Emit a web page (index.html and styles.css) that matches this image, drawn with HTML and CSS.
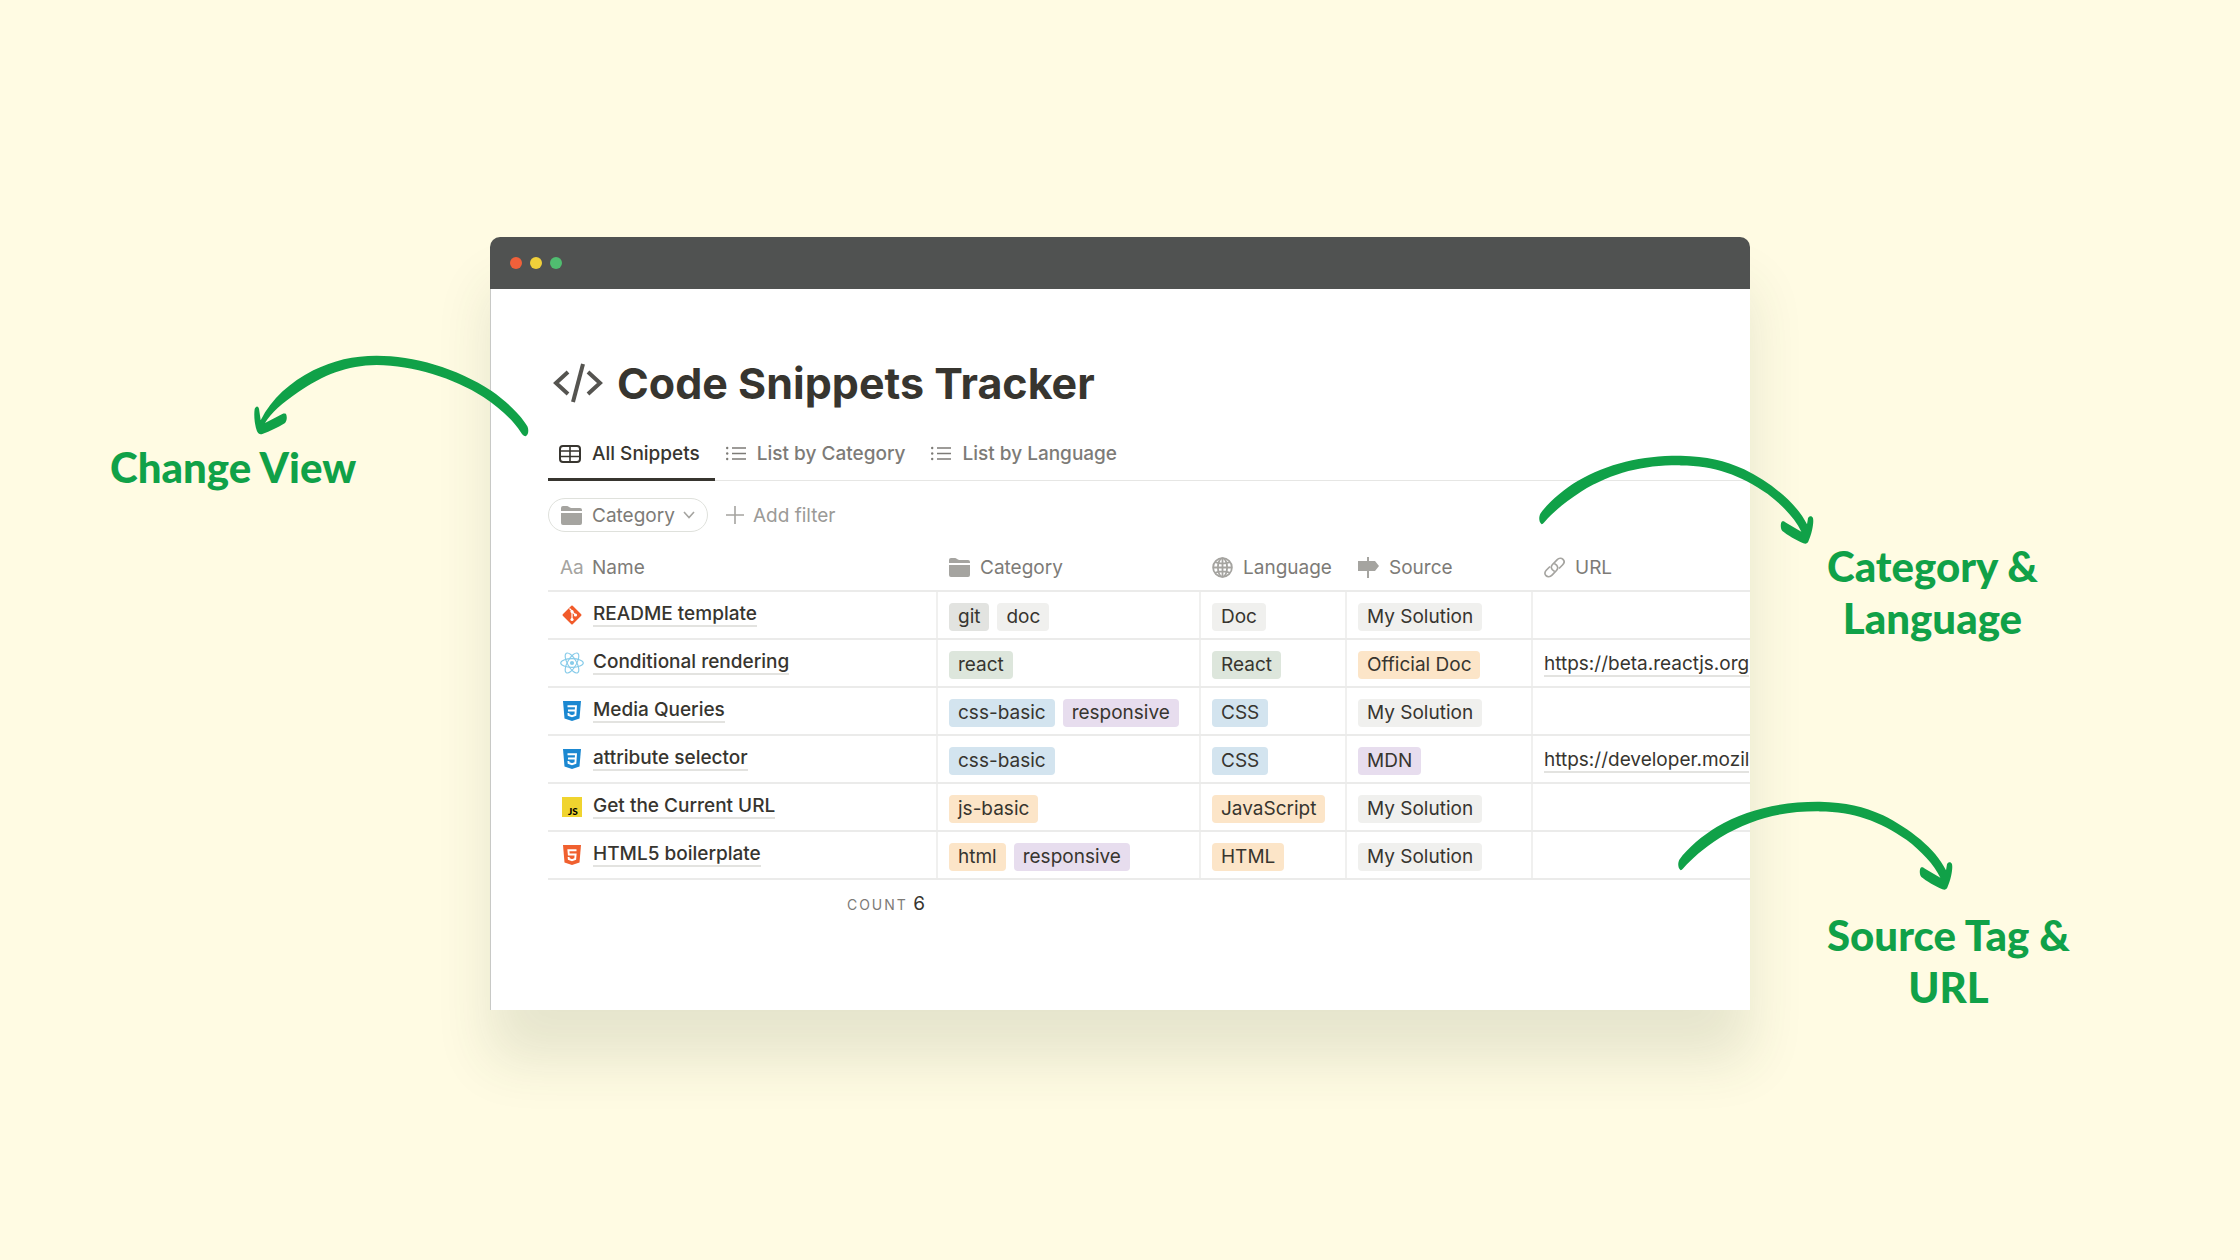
FILE: index.html
```html
<!DOCTYPE html>
<html lang="en">
<head>
  <meta charset="UTF-8">
  <meta name="viewport" content="width=device-width, initial-scale=1.0">
  <title>Code Snippets Tracker</title>
  <link rel="stylesheet" href="styles.css">
</head>
<body>

  <!-- Shared icons -->
  <svg class="sprite" aria-hidden="true">
    <symbol id="folder" viewBox="0 0 21 19">
      <path d="M0 2Q0 0 2 0H6Q7 0 8 1L10 2H19Q21 2 21 4V5H0Z M0 7H21V17Q21 19 19 19H2Q0 19 0 17Z" fill="#a5a4a0"/>
    </symbol>
    <symbol id="list" viewBox="0 0 20 15">
      <path d="M6 2H20M6 7.5H20M6 13H20" stroke="currentColor" stroke-width="1.6"/>
      <circle cx="1.2" cy="2" r="1.2" fill="currentColor"/>
      <circle cx="1.2" cy="7.5" r="1.2" fill="currentColor"/>
      <circle cx="1.2" cy="13" r="1.2" fill="currentColor"/>
    </symbol>
    <symbol id="css3" viewBox="0 0 18 20">
      <path d="M0 0H18L16.500 17.500L9 20L1.500 17.500Z" fill="#1b88d1"/>
      <path d="M4.500 5.200H13L12.400 14L9 15.200L5.600 14L5.400 12M5 9.500H12.700" fill="none" stroke="#fff" stroke-width="1.900"/>
    </symbol>
    <symbol id="arrow-right" viewBox="84 62 826 270">
      <path d="M92 270C82 262 84 246 88 238C112 204 160 164 200 140C290 86 400 63 510 64C590 66 640 78 700 105C780 145 857 205 889 270L892 252C896 244 904 244 907 252C910 262 905 295 893 322C890 329 884 329 878 327C855 317 830 302 815 290C809 284 809 268 813 262C817 259 822 261 826 265L872 292C854 254 815 212 770 178C690 122 610 93 510 93C400 92 310 112 210 172C160 204 124 236 100 264Q95 270 92 270Z" fill="#10a148"/>
    </symbol>
  </svg>

  <div class="stage">

    <div class="notes notes-left">
      <div class="note">
        <svg class="arrow arrow-view" viewBox="462 74 825 246" aria-hidden="true">
          <path d="M1277 318C1287 312 1286 296 1282 288C1260 250 1215 210 1175 182C1070 112 940 76 830 76C760 76 700 90 640 120C570 156 515 205 482 270L477 235C474 226 468 226 464 236C461 255 464 285 471 303C475 311 480 313 487 311C510 303 535 291 554 279C561 272 562 260 558 251C555 249 551 249 547 251L495 278C515 245 545 220 595 185C670 134 740 105 830 104C940 106 1060 142 1150 200C1200 234 1240 270 1262 305Q1270 318 1277 318Z" fill="#10a148"/>
        </svg>
        Change View
      </div>
    </div>

    <main class="window">
      <div class="titlebar">
        <span class="dot red"></span>
        <span class="dot yellow"></span>
        <span class="dot green"></span>
      </div>

      <div class="content">
        <h1>
          <svg class="code-icon" viewBox="0 0 50 40" aria-hidden="true">
            <path d="M15 9L3 20L15 31M35 9L47 20L35 31" fill="none" stroke="#555450" stroke-width="4"/>
            <path d="M30 1L20 39" stroke="#555450" stroke-width="4"/>
          </svg>
          Code Snippets Tracker
        </h1>

        <div class="tabs" role="tablist">
          <button class="tab active" role="tab" aria-selected="true">
            <svg class="table-icon" viewBox="0 0 22 18" aria-hidden="true">
              <rect x="1" y="1" width="20" height="16" rx="3" fill="none" stroke="currentColor" stroke-width="2"/>
              <path d="M1 6H21M1 11.500H21M11 1V17" stroke="currentColor" stroke-width="1.600"/>
            </svg>
            All Snippets
          </button>
          <button class="tab" role="tab" aria-selected="false">
            <svg class="list-icon" aria-hidden="true"><use href="#list"/></svg>
            List by Category
          </button>
          <button class="tab" role="tab" aria-selected="false">
            <svg class="list-icon" aria-hidden="true"><use href="#list"/></svg>
            List by Language
          </button>
        </div>

        <div class="filters">
          <div class="filter">
            <svg class="folder-icon" aria-hidden="true"><use href="#folder"/></svg>
            <select id="filter" aria-label="Filter">
              <option>Category</option>
            </select>
            <svg class="chevron" viewBox="0 0 12 8" aria-hidden="true"><path d="M1 1L6 6.500L11 1" fill="none" stroke="#a5a4a0" stroke-width="1.600"/></svg>
          </div>
          <button class="add-filter">
            <svg class="plus" viewBox="0 0 18 18" aria-hidden="true"><path d="M9 0V18M0 9H18" stroke="#a5a4a0" stroke-width="1.600"/></svg>
            Add filter
          </button>
        </div>

        <table>
          <colgroup>
            <col class="col-name">
            <col class="col-category">
            <col class="col-language">
            <col class="col-source">
            <col>
          </colgroup>
          <thead>
            <tr>
              <th><div class="head"><span class="aa">Aa</span>Name</div></th>
              <th><div class="head"><svg class="folder-icon" aria-hidden="true"><use href="#folder"/></svg>Category</div></th>
              <th><div class="head">
                <svg class="head-icon" viewBox="0 0 21 21" aria-hidden="true">
                  <g fill="none" stroke="#a5a4a0" stroke-width="1.800">
                    <circle cx="10.500" cy="10.500" r="9.400"/>
                    <ellipse cx="10.500" cy="10.500" rx="4.600" ry="9.400"/>
                    <path d="M10.500 1V20M1 10.500H20M3 5.200Q10.500 8 18 5.200M3 15.800Q10.500 13 18 15.800"/>
                  </g>
                </svg>Language</div></th>
              <th><div class="head">
                <svg class="head-icon" viewBox="0 0 21 21" aria-hidden="true">
                  <path d="M0 4H17L21 9L17 14H0Z M9 0H11V21H9Z" fill="#a5a4a0"/>
                </svg>Source</div></th>
              <th><div class="head">
                <svg class="head-icon" viewBox="0 0 21 21" aria-hidden="true">
                  <g fill="none" stroke="#a5a4a0" stroke-width="1.700" stroke-linecap="round">
                    <path d="M10 14C7 12.500 6.500 9.500 8.500 7.500L13 2.800C15 .8 17.500 .8 19 2.300S20.500 6 18.500 8L15.500 11"/>
                    <path d="M11 7C14 8.500 14.500 11.500 12.500 13.500L8 18.200C6 20.200 3.500 20.200 2 18.700S.5 15 2.500 13L5.500 10"/>
                  </g>
                </svg>URL</div></th>
            </tr>
          </thead>
          <tbody>
            <tr>
              <td><div class="name">
                <svg class="row-icon" viewBox="0 0 24 24" aria-hidden="true">
                  <rect x="5" y="5" width="14" height="14" rx="1" fill="#f15b2a" transform="rotate(45 12 12)"/>
                  <path d="M9.500 5.500L12 8V17M12 8.500L15.500 12" stroke="#fff" stroke-width="1.200" fill="none"/>
                  <circle cx="12" cy="8.500" r="1.600" fill="#fff"/>
                  <circle cx="12" cy="16.500" r="1.600" fill="#fff"/>
                  <circle cx="15.500" cy="12" r="1.600" fill="#fff"/>
                </svg>
                <a href="#">README template</a></div></td>
              <td><div class="tags"><span class="tag grey">git</span><span class="tag light">doc</span></div></td>
              <td><div class="tags"><span class="tag light">Doc</span></div></td>
              <td><div class="tags"><span class="tag light">My Solution</span></div></td>
              <td></td>
            </tr>
            <tr>
              <td><div class="name">
                <svg class="row-icon" viewBox="0 0 24 24" aria-hidden="true">
                  <g fill="none" stroke="#86cbe9" stroke-width="1.100">
                    <ellipse cx="12" cy="12" rx="11.300" ry="4.400"/>
                    <ellipse cx="12" cy="12" rx="11.300" ry="4.400" transform="rotate(60 12 12)"/>
                    <ellipse cx="12" cy="12" rx="11.300" ry="4.400" transform="rotate(120 12 12)"/>
                  </g>
                  <circle cx="12" cy="12" r="2.100" fill="#86cbe9"/>
                </svg>
                <a href="#">Conditional rendering</a></div></td>
              <td><div class="tags"><span class="tag sage">react</span></div></td>
              <td><div class="tags"><span class="tag sage">React</span></div></td>
              <td><div class="tags"><span class="tag orange">Official Doc</span></div></td>
              <td><a class="url" href="https://beta.reactjs.org">https://beta.reactjs.org</a></td>
            </tr>
            <tr>
              <td><div class="name">
                <svg class="row-icon shield" aria-hidden="true"><use href="#css3"/></svg>
                <a href="#">Media Queries</a></div></td>
              <td><div class="tags"><span class="tag blue">css-basic</span><span class="tag purple">responsive</span></div></td>
              <td><div class="tags"><span class="tag blue">CSS</span></div></td>
              <td><div class="tags"><span class="tag light">My Solution</span></div></td>
              <td></td>
            </tr>
            <tr>
              <td><div class="name">
                <svg class="row-icon shield" aria-hidden="true"><use href="#css3"/></svg>
                <a href="#">attribute selector</a></div></td>
              <td><div class="tags"><span class="tag blue">css-basic</span></div></td>
              <td><div class="tags"><span class="tag blue">CSS</span></div></td>
              <td><div class="tags"><span class="tag purple">MDN</span></div></td>
              <td><a class="url" href="https://developer.mozilla.org">https://developer.mozil</a></td>
            </tr>
            <tr>
              <td><div class="name">
                <svg class="row-icon shield" viewBox="0 0 20 20" aria-hidden="true">
                  <rect width="20" height="20" fill="#f0d42f"/>
                  <text class="js" x="6" y="18">JS</text>
                </svg>
                <a href="#">Get the Current URL</a></div></td>
              <td><div class="tags"><span class="tag orange">js-basic</span></div></td>
              <td><div class="tags"><span class="tag orange">JavaScript</span></div></td>
              <td><div class="tags"><span class="tag light">My Solution</span></div></td>
              <td></td>
            </tr>
            <tr>
              <td><div class="name">
                <svg class="row-icon shield" viewBox="0 0 18 20" aria-hidden="true">
                  <path d="M0 0H18L16.500 17.500L9 20L1.500 17.500Z" fill="#f0602f"/>
                  <path d="M13.500 5.200H5.400L5.800 9.500H12.600L12.200 14L9 15.200L5.800 14L5.600 12" fill="none" stroke="#fff" stroke-width="1.900"/>
                </svg>
                <a href="#">HTML5 boilerplate</a></div></td>
              <td><div class="tags"><span class="tag orange">html</span><span class="tag purple">responsive</span></div></td>
              <td><div class="tags"><span class="tag orange">HTML</span></div></td>
              <td><div class="tags"><span class="tag light">My Solution</span></div></td>
              <td></td>
            </tr>
          </tbody>
          <tfoot>
            <tr>
              <td class="count"><span class="count-label">COUNT</span> 6</td>
            </tr>
          </tfoot>
        </table>
      </div>
    </main>

    <div class="notes notes-right">
      <div class="note">
        <svg class="arrow arrow-category" aria-hidden="true"><use href="#arrow-right"/></svg>
        Category &amp;<br>Language
      </div>
      <div class="note">
        <svg class="arrow arrow-source" aria-hidden="true"><use href="#arrow-right"/></svg>
        Source Tag &amp;<br>URL
      </div>
    </div>

  </div>

</body>
</html>
```

FILE: styles.css
```css
* {
  box-sizing: border-box;
}

body {
  margin: 0;
  min-height: 100vh;
  display: flex;
  align-items: center;
  padding-bottom: 10px;
  background-color: #fffbe3;
  color: #37352f;
  font-family: Inter, "Liberation Sans", sans-serif;
  font-size: 19px;
}

svg {
  flex: none;
}

button,
select {
  font: inherit;
  color: inherit;
  background: none;
  border: none;
  padding: 0;
  cursor: pointer;
}

.sprite {
  position: absolute;
  width: 0;
  height: 0;
}

.stage {
  width: 100%;
  display: grid;
  grid-template-columns: 490fr 1260fr 490fr;
  align-items: start;
}

/* Notes around the window */
.notes {
  display: flex;
  flex-direction: column;
  align-items: flex-start;
}

.notes-left {
  padding: 204px 0 0 110px;
}

.notes-right {
  padding: 303px 0 0 77px;
  gap: 265px;
}

.note {
  position: relative;
  font-family: Lato, sans-serif;
  font-size: 42px;
  font-weight: 900;
  line-height: 52px;
  text-align: center;
  white-space: nowrap;
  color: #10a148;
}

.arrow {
  position: absolute;
  z-index: 1;
  width: 275px;
}

.arrow-view {
  left: 144px;
  top: -86px;
  height: 82px;
}

.arrow-category {
  left: -288px;
  top: -85px;
  height: 90px;
}

.arrow-source {
  left: -149px;
  top: -108px;
  height: 90px;
}

/* Window */
.window {
  min-width: 0;
  border-radius: 10px 10px 0 0;
  box-shadow: 0 50px 55px rgba(50, 75, 50, 0.12);
}

.titlebar {
  display: flex;
  align-items: center;
  gap: 8px;
  height: 52px;
  padding-left: 20px;
  border-radius: 10px 10px 0 0;
  background-color: #505251;
}

.dot {
  width: 12px;
  height: 12px;
  border-radius: 50%;
}

.red {
  background-color: #f0603a;
}

.yellow {
  background-color: #f0d03a;
}

.green {
  background-color: #50bd70;
}

.content {
  overflow: hidden;
  padding: 64px 0 83px 57px;
  background-color: #fff;
  border-left: 1px solid #c8c9c6;
}

h1 {
  display: flex;
  align-items: center;
  gap: 14px;
  margin: 0 0 28px 5px;
  font-size: 43px;
  font-weight: 700;
  line-height: 60px;
}

.code-icon {
  width: 50px;
  height: 40px;
}

/* Tabs */
.tabs {
  display: flex;
  border-bottom: 1px solid #e6e6e4;
}

.tab {
  display: flex;
  align-items: center;
  gap: 11px;
  height: 40px;
  padding: 0 15px 12px 11px;
  margin-bottom: -1px;
  border-bottom: 3px solid transparent;
  font-weight: 500;
  color: #7d7b77;
  white-space: nowrap;
}

.tab.active {
  color: #37352f;
  border-bottom-color: #37352f;
}

.table-icon {
  width: 22px;
  height: 18px;
}

.list-icon {
  width: 20px;
  height: 15px;
}

/* Filters */
.filters {
  display: flex;
  align-items: center;
  gap: 18px;
  padding: 17px 0 16px;
  color: #7d7b77;
}

.filter {
  display: flex;
  align-items: center;
  height: 34px;
  padding: 0 12px;
  border: 1px solid #dfe1dc;
  border-radius: 17px;
}

.filter select {
  appearance: none;
  margin: 0 8px 0 10px;
}

.folder-icon {
  width: 21px;
  height: 19px;
}

.chevron {
  width: 12px;
  height: 8px;
}

.add-filter {
  display: flex;
  align-items: center;
  gap: 9px;
  color: #9b9a97;
}

.plus {
  width: 18px;
  height: 18px;
}

/* Table */
table {
  width: 100%;
  table-layout: fixed;
  border-collapse: collapse;
}

.col-name {
  width: 389px;
}

.col-category {
  width: 263px;
}

.col-language {
  width: 146px;
}

.col-source {
  width: 186px;
}

th,
td {
  height: 48px;
  padding: 0 12px;
  text-align: left;
  border-bottom: 2px solid #ebebea;
}

th {
  height: 43px;
  padding-bottom: 3px;
  font-weight: 400;
  color: #7d7b77;
}

tbody td + td {
  padding-left: 11px;
  padding-right: 0;
  border-left: 2px solid #f0f0ef;
}

.head {
  display: flex;
  align-items: center;
  gap: 10px;
  white-space: nowrap;
}

.head-icon {
  width: 21px;
  height: 21px;
}

.aa {
  width: 22px;
  color: #a5a4a0;
}

.name {
  display: flex;
  align-items: center;
  gap: 9px;
  font-weight: 500;
}

.row-icon {
  width: 24px;
  height: 24px;
}

.row-icon.shield {
  height: 20px;
}

.js {
  font-family: Lato, sans-serif;
  font-size: 10px;
  font-weight: 900;
}

.name a,
.url {
  color: inherit;
  text-decoration: none;
  line-height: 22px;
  border-bottom: 2px solid #e3e3e0;
}

.url {
  white-space: nowrap;
}

.tags {
  display: flex;
  gap: 8px;
  padding-top: 3px;
}

.tag {
  height: 28px;
  padding: 0 9px;
  border-radius: 4px;
  line-height: 28px;
  white-space: nowrap;
}

.grey {
  background-color: #e2e3e0;
}

.light {
  background-color: #f0f0ee;
}

.sage {
  background-color: #dde6dc;
}

.orange {
  background-color: #fce5c8;
}

.blue {
  background-color: #d3e4ef;
}

.purple {
  background-color: #e7ddee;
}

.count {
  border: none;
  text-align: right;
}

.count-label {
  font-size: 14px;
  letter-spacing: 2px;
  color: #7d7b77;
}
```
